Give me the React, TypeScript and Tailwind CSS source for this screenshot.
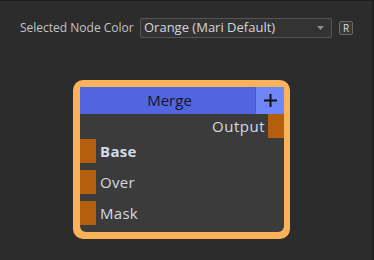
import React from "react";

const font = { fontFamily: '"Open Sans", "Noto Sans", sans-serif' };

const Port = () => <div className="w-[16px] h-[24px] bg-[#b35f0e] shrink-0" />;

const InputRow = ({ label, bold }: { label: string; bold?: boolean }) => (
  <div className="flex items-center h-[24px] gap-[4px]">
    <Port />
    <span className={`text-[15px] text-[#d2dbe6] tracking-[0.3px] ${bold ? "font-bold" : ""}`}>{label}</span>
  </div>
);

export default function App() {
  return (
    <div className="w-[374px] h-[260px] bg-[#2c2c2c] border-t border-t-[#1f1f1f] border-r-2 border-r-[#1e1e1e] flex flex-col overflow-hidden" style={font}>
      {/* node color selector */}
      <div className="flex items-center pl-[20px] mt-[17px] h-[20px]">
        <span className="text-[12px] text-[#c4c4c4] w-[120px]">Selected Node Color</span>
        <div className="w-[192px] h-[20px] bg-[#333333] border border-[#555555] rounded-[2px] flex items-center pl-[3px] pr-[7px]">
          <span className="flex-1 text-[13px] text-[#d4d6de]">Orange (Mari Default)</span>
          <svg width="7" height="4" viewBox="0 0 7 4"><path d="M0 0h7L3.5 4z" fill="#8c8c8c" /></svg>
        </div>
        <div className="ml-[7px] w-[14px] h-[14px] bg-[#3a3a3a] border border-[#686868] rounded-[2px] flex items-center justify-center text-[10px] leading-none text-[#d6dbe8]">R</div>
      </div>

      {/* merge node */}
      <div className="ml-[73px] mt-[42px] w-[217px] h-[159px] bg-[#fcb25a] rounded-[10px] pl-[7px] pr-[6px] py-[7px]">
        <div className="h-full flex flex-col rounded-b-[6px] overflow-hidden">
          <div className="flex h-[27px] shrink-0">
            <div className="flex-1 bg-[#5265e1] flex items-center justify-center text-[15px] text-[#151528] pl-[4px]">Merge</div>
            <div className="w-[29px] bg-[#6e86f8] border-l border-l-[#4a5cc8] flex items-center justify-center">
              <svg width="13" height="13" viewBox="0 0 13 13">
                <path d="M0 6.5h13M6.5 0v13" stroke="#101010" strokeWidth="2" />
              </svg>
            </div>
          </div>
          <div className="flex-1 bg-[#3b3b3b] flex flex-col">
            <div className="flex items-center justify-end h-[24px] gap-[3px]">
              <span className="text-[15px] text-[#d2dbe6] tracking-[0.5px]">Output</span>
              <Port />
            </div>
            <div className="flex flex-col gap-[7px] mt-[1px]">
              <InputRow label="Base" bold />
              <InputRow label="Over" />
              <InputRow label="Mask" />
            </div>
          </div>
        </div>
      </div>
    </div>
  );
}
